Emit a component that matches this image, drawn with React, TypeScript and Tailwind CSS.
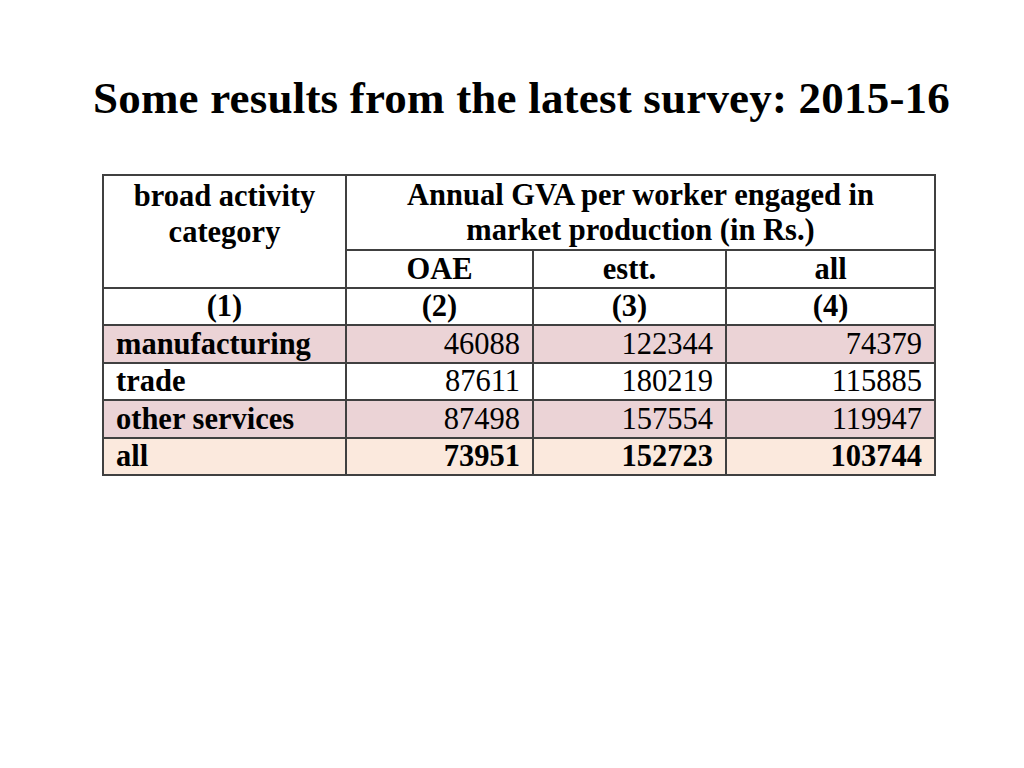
import React from "react";

const rows = [
  { label: "manufacturing", v: ["46088", "122344", "74379"], bg: "bg-[#ebd3d6]", bold: false },
  { label: "trade", v: ["87611", "180219", "115885"], bg: "bg-white", bold: false },
  { label: "other services", v: ["87498", "157554", "119947"], bg: "bg-[#ebd3d6]", bold: false },
  { label: "all", v: ["73951", "152723", "103744"], bg: "bg-[#fbe9dd]", bold: true },
];

export default function App() {
  const cell = "border-2 border-[#404040] h-[37.5px] p-0 leading-[34px]";
  return (
    <div className="w-[1024px] h-[768px] bg-white text-black" style={{ fontFamily: '"Liberation Serif", "Times New Roman", serif' }}>
      <div className="pt-[70px] pl-[93px]">
        <h1 className="text-[45px] font-bold leading-[56px] tracking-[0.2px] whitespace-nowrap">Some results from the latest survey: 2015-16</h1>
      </div>
      <div className="mt-[48px] ml-[102px]">
        <table className="border-collapse text-[30.5px] w-[832px] table-fixed">
          <colgroup>
            <col className="w-[243px]" />
            <col className="w-[187px]" />
            <col className="w-[193px]" />
            <col className="w-[209px]" />
          </colgroup>
          <tbody>
            <tr>
              <td rowSpan={2} className="border-2 border-[#404040] align-top text-center font-bold leading-[36px] pt-[2px] px-0 pb-0">
                broad activity<br />category
              </td>
              <td colSpan={3} className="border-2 border-[#404040] h-[75px] align-top text-center font-bold leading-[35px] pt-[2px] px-0 pb-0">
                Annual GVA per worker engaged in<br />market production (in Rs.)
              </td>
            </tr>
            <tr>
              <td className={`${cell} text-center font-bold`}>OAE</td>
              <td className={`${cell} text-center font-bold`}>estt.</td>
              <td className={`${cell} text-center font-bold`}>all</td>
            </tr>
            <tr>
              <td className={`${cell} text-center font-bold`}>(1)</td>
              <td className={`${cell} text-center font-bold`}>(2)</td>
              <td className={`${cell} text-center font-bold`}>(3)</td>
              <td className={`${cell} text-center font-bold`}>(4)</td>
            </tr>
            {rows.map((r) => (
              <tr key={r.label} className={r.bg}>
                <td className={`${cell} pl-[12px] font-bold`}>{r.label}</td>
                {r.v.map((x, i) => (
                  <td key={i} className={`${cell} text-right pr-[12px] ${r.bold ? "font-bold" : ""}`}>{x}</td>
                ))}
              </tr>
            ))}
          </tbody>
        </table>
      </div>
    </div>
  );
}
